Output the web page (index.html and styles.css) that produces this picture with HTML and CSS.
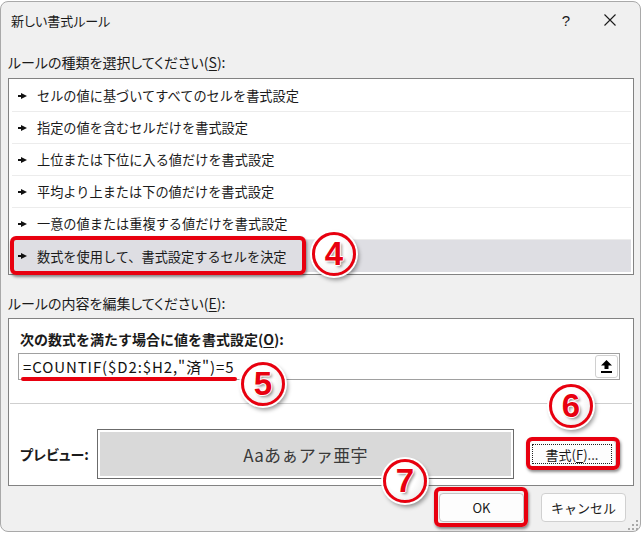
FILE: index.html
```html
<!DOCTYPE html>
<html lang="ja">
<head>
    <meta charset="UTF-8">
    <title>新しい書式ルール</title>
    <link rel="stylesheet" href="styles.css">
</head>
<body>
    <div class="dialog">
        <div class="titlebar">
            <span class="title">新しい書式ルール</span>
            <span class="tb-btn help">?</span>
            <span class="tb-btn close">
                <svg width="12" height="12" viewBox="0 0 12 12"><path d="M0.5 0.5L11.5 11.5M11.5 0.5L0.5 11.5" stroke="#1a1a1a" stroke-width="1.1" fill="none"/></svg>
            </span>
        </div>

        <div class="content">
            <div class="label">ルールの種類を選択してください(<u>S</u>):</div>
            <div class="listbox">
                <div class="item"><span class="arrow"></span>セルの値に基づいてすべてのセルを書式設定</div>
                <div class="item"><span class="arrow"></span>指定の値を含むセルだけを書式設定</div>
                <div class="item"><span class="arrow"></span>上位または下位に入る値だけを書式設定</div>
                <div class="item"><span class="arrow"></span>平均より上または下の値だけを書式設定</div>
                <div class="item"><span class="arrow"></span>一意の値または重複する値だけを書式設定</div>
                <div class="item selected"><span class="arrow"></span>数式を使用して、書式設定するセルを決定</div>
            </div>

            <div class="label label-2">ルールの内容を編集してください(<u>E</u>):</div>
            <div class="panel">
                <div class="panel-head">次の数式を満たす場合に値を書式設定(<u>O</u>):</div>
                <div class="formula">
                    <span class="formula-text">=COUNTIF($D2:$H2,"済")=5</span>
                    <span class="pick-btn">
                        <svg width="11" height="13" viewBox="0 0 11 13"><path d="M5.5 0L11 5.5H7.5V9H3.5V5.5H0Z" fill="#000"/><rect x="0" y="11" width="11" height="2" fill="#000"/></svg>
                    </span>
                </div>
                <div class="sep"></div>
                <div class="preview-row">
                    <span class="preview-label">プレビュー:</span>
                    <div class="preview-box"><div class="preview-fill">Aaあぁアァ亜宇</div></div>
                    <span class="btn format-btn"><span class="focus">書式(<u>F</u>)...</span></span>
                </div>
            </div>

            <div class="actions">
                <span class="btn ok-btn">OK</span>
                <span class="btn">キャンセル</span>
            </div>
        </div>
        <div class="grip">
            <svg width="10" height="10" viewBox="0 0 10 10" fill="#a8a8a8"><rect x="8" y="0" width="2" height="2"/><rect x="4" y="4" width="2" height="2"/><rect x="8" y="4" width="2" height="2"/><rect x="0" y="8" width="2" height="2"/><rect x="4" y="8" width="2" height="2"/><rect x="8" y="8" width="2" height="2"/></svg>
        </div>
    </div>

    <!-- 注釈 -->
    <div class="mark mark-4"></div>
    <div class="mark mark-6"></div>
    <div class="mark mark-7"></div>
    <div class="underline"></div>
    <span class="num num-4">4</span>
    <span class="num num-5">5</span>
    <span class="num num-6">6</span>
    <span class="num num-7">7</span>
</body>
</html>
```

FILE: styles.css
```css
body {
    margin: 0;
    background: #ffffff;
    font-family: "Noto Sans CJK JP", "Noto Sans", sans-serif;
    color: #1a1a1a;
    font-size: 13px;
    overflow: hidden;
}
.dialog {
    position: relative;
    box-sizing: border-box;
    width: 641px;
    height: 531px;
    margin-top: 1px;
    background: #f0f0f0;
    border: 1px solid #a9a9a9;
    border-radius: 8px;
}
.titlebar {
    display: flex;
    align-items: center;
    height: 36px;
    padding-left: 10px;
}
.title {
    flex: 1;
    font-size: 13px;
    font-feature-settings: "palt";
}
.tb-btn {
    display: flex;
    align-items: center;
    justify-content: center;
    width: 44px;
    height: 36px;
}
.help {
    font-size: 15px;
    font-family: "Liberation Sans", sans-serif;
}
.close {
    margin-right: 8px;
}
.content {
    padding: 0 6px 0 7px;
}
.label {
    margin-top: 14px;
    height: 20px;
    line-height: 20px;
    font-size: 14px;
    font-feature-settings: "palt";
}
.label u, .panel-head u, .format-btn u {
    text-underline-offset: 2px;
}
.listbox {
    margin-top: 6px;
    background: #fff;
    border: 1px solid #828282;
    padding: 1px 2px 2px 3px;
}
.item {
    display: flex;
    align-items: center;
    box-sizing: border-box;
    height: 32px;
    padding-left: 6px;
    border-bottom: 1px solid #ececec;
    font-size: 13.2px;
}
.item.selected {
    background: #dedee3;
    border-bottom: none;
}
.arrow {
    display: inline-block;
    width: 4px;
    height: 2px;
    background: #111;
    margin-right: 15px;
}
.arrow::after {
    content: "";
    display: inline-block;
    border-left: 6px solid #111;
    border-top: 3px solid transparent;
    border-bottom: 3px solid transparent;
    margin-left: 3px;
    vertical-align: top;
    margin-top: -2px;
}
.label-2 {
    margin-top: 18px;
}
.panel {
    margin-top: 5px;
    background: #fff;
    border: 1px solid #828282;
    padding: 0 0 6px 0;
}
.panel-head {
    padding: 10px 0 0 11px;
    height: 20px;
    line-height: 20px;
    font-size: 14px;
    font-weight: bold;
}
.formula {
    display: flex;
    align-items: center;
    justify-content: space-between;
    box-sizing: border-box;
    margin: 4px 13px 0 9px;
    height: 27px;
    border: 1px solid #a0a0a0;
}
.formula-text {
    padding-left: 4px;
    font-size: 15px;
    letter-spacing: 0.9px;
    color: #111;
}
.pick-btn {
    display: flex;
    align-items: center;
    justify-content: center;
    box-sizing: border-box;
    width: 23px;
    height: 23px;
    margin-right: 1px;
    background: #fff;
    border: 1px solid #d0d0d0;
    border-radius: 3px;
}
.sep {
    margin: 23px 1px 0 1px;
    height: 1px;
    background: #cfcfcf;
}
.preview-row {
    display: flex;
    align-items: center;
    padding: 25px 0 0 11px;
}
.preview-label {
    width: 77px;
    font-size: 14px;
    font-weight: bold;
    font-feature-settings: "palt";
}
.preview-box {
    box-sizing: border-box;
    width: 417px;
    height: 50px;
    border: 1px solid #6b6b6b;
    padding: 2px;
    background: #fff;
}
.preview-fill {
    height: 100%;
    background: #d9d9d9;
    display: flex;
    align-items: center;
    justify-content: center;
    font-size: 17px;
    color: #3a3a3a;
    letter-spacing: 0.3px;
}
.btn {
    display: inline-flex;
    align-items: center;
    justify-content: center;
    box-sizing: border-box;
    width: 85px;
    height: 29px;
    background: #fdfdfd;
    border: 1px solid #d0d0d0;
    border-radius: 4px;
    font-size: 13px;
}
.format-btn {
    margin-left: 14px;
    width: 88px;
    height: 28px;
    padding: 3px;
}
.focus {
    display: flex;
    align-items: center;
    justify-content: center;
    width: 100%;
    height: 100%;
    border: 1px dotted #222;
    box-sizing: border-box;
}
.actions {
    display: flex;
    justify-content: flex-end;
    gap: 17px;
    margin-top: 7px;
    padding-right: 8px;
}
.ok-btn {
    border-color: #c4c4c4;
}
.grip {
    position: absolute;
    right: 2px;
    bottom: 1px;
    line-height: 0;
}

/* 赤枠と番号 */
.mark {
    position: absolute;
    box-sizing: border-box;
    border: 4px solid #e8000f;
    border-radius: 6px;
    box-shadow: 1px 2px 3px rgba(0, 0, 0, 0.45);
}
.mark-4 {
    left: 10px;
    top: 236px;
    width: 296px;
    height: 39px;
}
.mark-6 {
    left: 526px;
    top: 437px;
    width: 94px;
    height: 33px;
}
.mark-7 {
    left: 434px;
    top: 487px;
    width: 94px;
    height: 40px;
}
.underline {
    position: absolute;
    left: 21px;
    top: 377px;
    width: 216px;
    height: 4px;
    border-radius: 2px;
    background: #e8000f;
}
.num {
    position: absolute;
    width: 38px;
    height: 38px;
    line-height: 38px;
    text-align: center;
    border: 3px solid #e8000f;
    border-radius: 50%;
    background: radial-gradient(circle at 40% 40%, #ffffff 45%, #e4e4e4 100%);
    box-shadow: 0 0 0 2px #fff, 2px 3px 4px 1px rgba(0, 0, 0, 0.4);
    font-family: "Liberation Sans", sans-serif;
    font-size: 33px;
    font-weight: bold;
    color: #e8000f;
    text-shadow: 1px 0 0 #fff, -1px 0 0 #fff, 0 1px 0 #fff, 0 -1px 0 #fff, 2px 2px 3px rgba(0, 0, 0, 0.45);
}
.num-4 { left: 312px; top: 232px; }
.num-5 { left: 241px; top: 362px; }
.num-6 { left: 549px; top: 384px; }
.num-7 { left: 383px; top: 459px; }
```
